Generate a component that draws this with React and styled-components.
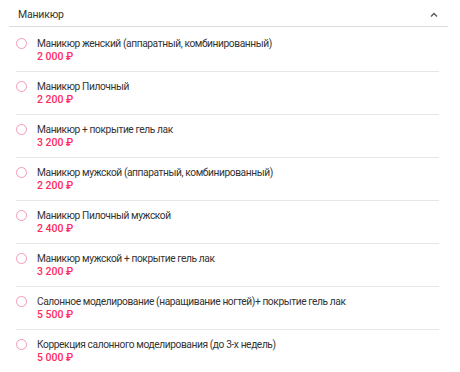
import styled, { createGlobalStyle } from "styled-components";

const GlobalStyle = createGlobalStyle`
  body {
    margin: 0;
    background: #fff;
    font-family: Roboto, "Liberation Sans", sans-serif;
  }
`;

const services = [
  { name: "Маникюр женский (аппаратный, комбинированный)", price: "2 000 ₽" },
  { name: "Маникюр Пилочный", price: "2 200 ₽" },
  { name: "Маникюр + покрытие гель лак", price: "3 200 ₽" },
  { name: "Маникюр мужской (аппаратный, комбинированный)", price: "2 200 ₽" },
  { name: "Маникюр Пилочный мужской", price: "2 400 ₽" },
  { name: "Маникюр мужской + покрытие гель лак", price: "3 200 ₽" },
  { name: "Салонное моделирование (наращивание ногтей)+ покрытие гель лак", price: "5 500 ₽" },
  { name: "Коррекция салонного моделирования (до 3-х недель)", price: "5 000 ₽" },
];

const Wrapper = styled.div`
  padding: 0 12px 0 9px;
`;

const Header = styled.div`
  display: flex;
  align-items: center;
  justify-content: space-between;
  padding: 8px 10px 4px 9px;
  border-bottom: 1.5px solid #dcdcdc;
`;

const Title = styled.span`
  font-size: 10.5px;
  line-height: 14px;
  letter-spacing: -0.2px;
  color: #333;
`;

const Chevron = styled.svg`
  width: 8px;
  height: 6px;
`;

const List = styled.ul`
  list-style: none;
  margin: 0;
  padding: 0 9px 0 7px;
`;

const Item = styled.li`
  display: flex;
  gap: 10px;
  padding: ${(p) => (p.$first ? "10px" : "8px")} 0 8px 0;
  border-bottom: ${(p) => (p.$last ? "none" : "1px solid #e6e6e6")};
`;

const Radio = styled.span`
  flex: none;
  width: 11px;
  height: 11px;
  margin-top: 1px;
  border: 1.2px solid #f29ab2;
  border-radius: 50%;
  box-sizing: border-box;
`;

const Info = styled.div`
  display: flex;
  flex-direction: column;
`;

const Name = styled.span`
  font-size: 10.2px;
  line-height: 13px;
  letter-spacing: -0.4px;
  color: #333;
`;

const Price = styled.span`
  font-size: 10.5px;
  line-height: 13px;
  font-weight: 500;
  color: #ff2b5e;
`;

const App = () => {
  return (
    <>
      <GlobalStyle />
      <Wrapper>
        <Header>
          <Title>Маникюр</Title>
          <Chevron viewBox="0 0 8 6">
            <path d="M1 4.5 L4 1.5 L7 4.5" fill="none" stroke="#555" strokeWidth="1.3" />
          </Chevron>
        </Header>
        <List>
          {services.map((s, i) => (
            <Item key={i} $first={i === 0} $last={i === services.length - 1}>
              <Radio />
              <Info>
                <Name>{s.name}</Name>
                <Price>{s.price}</Price>
              </Info>
            </Item>
          ))}
        </List>
      </Wrapper>
    </>
  );
};

export default App;
